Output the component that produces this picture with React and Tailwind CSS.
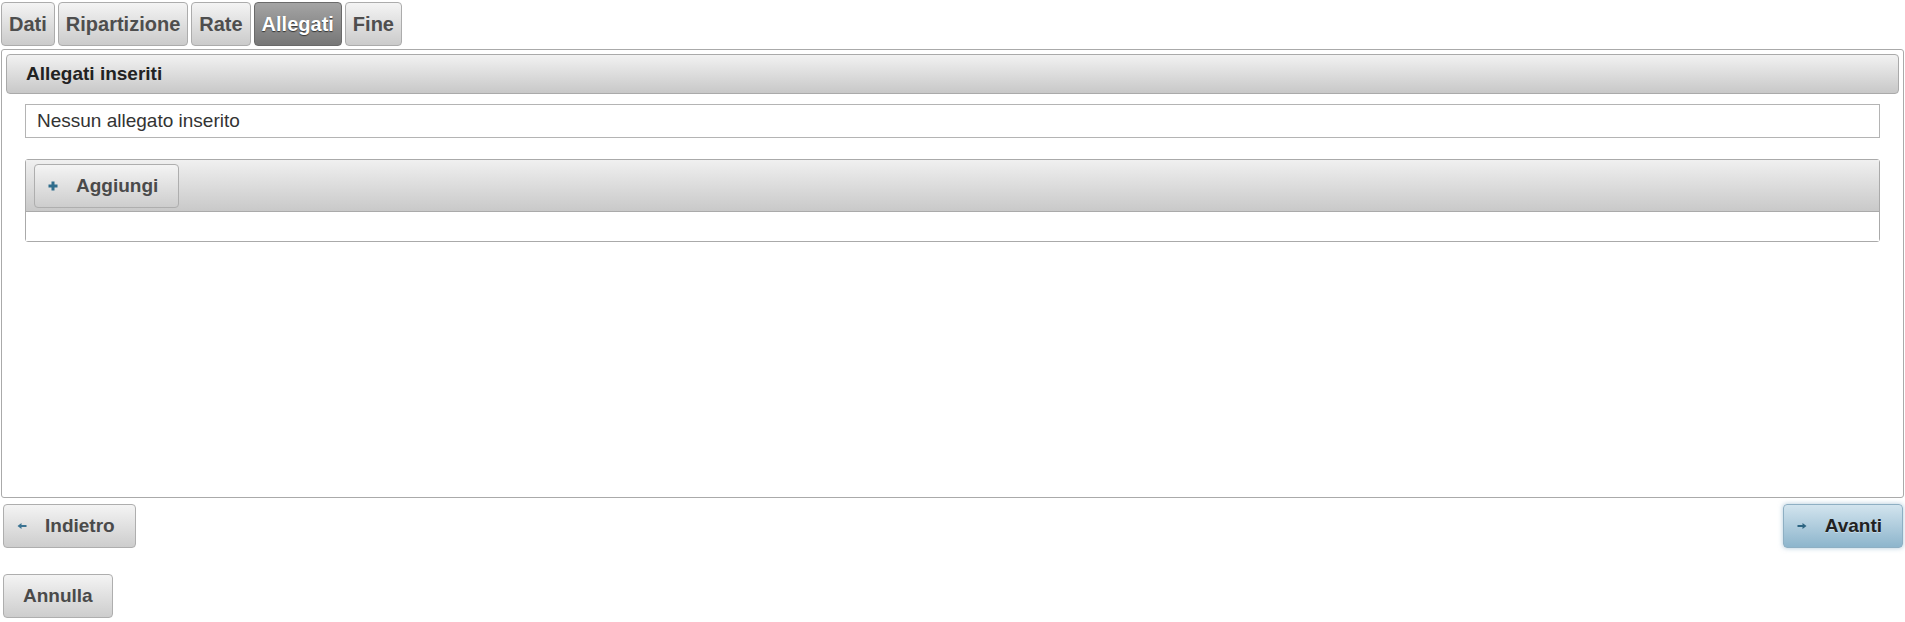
import { useState } from 'react'

const tabs = ['Dati', 'Ripartizione', 'Rate', 'Allegati', 'Fine']

function ArrowIcon({ dir = 'left', color = '#3b7392' }) {
  const points = dir === 'left'
    ? '3.5,8 7.5,5 7.5,7 12.5,7 12.5,9 7.5,9 7.5,11'
    : '12.5,8 8.5,5 8.5,7 3.5,7 3.5,9 8.5,9 8.5,11'
  return (
    <svg width="16" height="16" viewBox="0 0 16 16" className="shrink-0">
      <polygon points={points} fill={color} />
    </svg>
  )
}

function PlusIcon() {
  return (
    <svg width="16" height="16" viewBox="0 0 16 16" className="shrink-0">
      <rect x="3.5" y="6.5" width="9" height="3" fill="#2f6d8c" />
      <rect x="6.5" y="3.5" width="3" height="9" fill="#2f6d8c" />
    </svg>
  )
}

function Button({ icon, children, primary = false }) {
  return (
    <button
      className={`flex items-center h-[44px] border rounded-[4px] text-[19px] font-bold ${
        icon ? 'pl-[10px] pr-[20px]' : 'px-[19px]'
      } ${
        primary
          ? 'border-[#8eafc3] bg-gradient-to-b from-[#d2e4ee] to-[#8db5cc] text-[#222] shadow-[0_0_5px_rgba(120,165,195,0.6)] [text-shadow:0_1px_0_rgba(255,255,255,0.4)]'
          : 'border-[#aeaeae] bg-gradient-to-b from-[#f4f4f4] to-[#cdcdcd] text-[#4a4a4a]'
      }`}
    >
      {icon}
      <span className={icon ? 'ml-[15px]' : ''}>{children}</span>
    </button>
  )
}

export default function App() {
  const [active, setActive] = useState('Allegati')

  return (
    <div className="w-[1905px] h-[622px] bg-white px-[1px] pt-[2px] font-['Liberation_Sans',Arial,sans-serif]">
      {/* Schede */}
      <div className="flex gap-[3px]">
        {tabs.map(tab => (
          <button
            key={tab}
            onClick={() => setActive(tab)}
            className={`h-[44px] px-[7px] border rounded-[4px] text-[20px] font-bold flex items-center ${
              active === tab
                ? 'border-[#6a6a6a] bg-gradient-to-b from-[#a4a4a4] to-[#777] text-white [text-shadow:0_1px_1px_#333]'
                : 'border-[#acacac] bg-gradient-to-b from-[#f4f4f4] to-[#cbcbcb] text-[#4e4e4e]'
            }`}
          >
            {tab}
          </button>
        ))}
      </div>

      {/* Pannello allegati */}
      <div className="mt-[3px] h-[449px] border border-[#aaa] rounded-[3px] p-[4px]">
        <div className="h-[40px] flex items-center pl-[19px] border border-[#aaa] rounded-[4px] bg-gradient-to-b from-[#f2f2f2] to-[#c8c8c8] text-[19px] font-bold text-[#222]">
          Allegati inseriti
        </div>
        <div className="px-[19px]">
          <div className="mt-[10px] h-[34px] flex items-center pl-[11px] border border-[#b4b4b4] text-[19px] text-[#333]">
            Nessun allegato inserito
          </div>
          <div className="mt-[21px] border border-[#aaa] rounded-[3px]">
            <div className="px-[8px] pt-[4px] pb-[3px] border-b border-[#aaa] bg-gradient-to-b from-[#f0f0f0] to-[#c9c9c9]">
              <Button icon={<PlusIcon />}>Aggiungi</Button>
            </div>
            <div className="h-[29px] bg-white" />
          </div>
        </div>
      </div>

      {/* Navigazione */}
      <div className="mt-[6px] flex justify-between pl-[2px] pr-[1px]">
        <Button icon={<ArrowIcon dir="left" />}>Indietro</Button>
        <Button primary icon={<ArrowIcon dir="right" color="#2d6582" />}>Avanti</Button>
      </div>
      <div className="mt-[26px] pl-[2px]">
        <Button>Annulla</Button>
      </div>
    </div>
  )
}
